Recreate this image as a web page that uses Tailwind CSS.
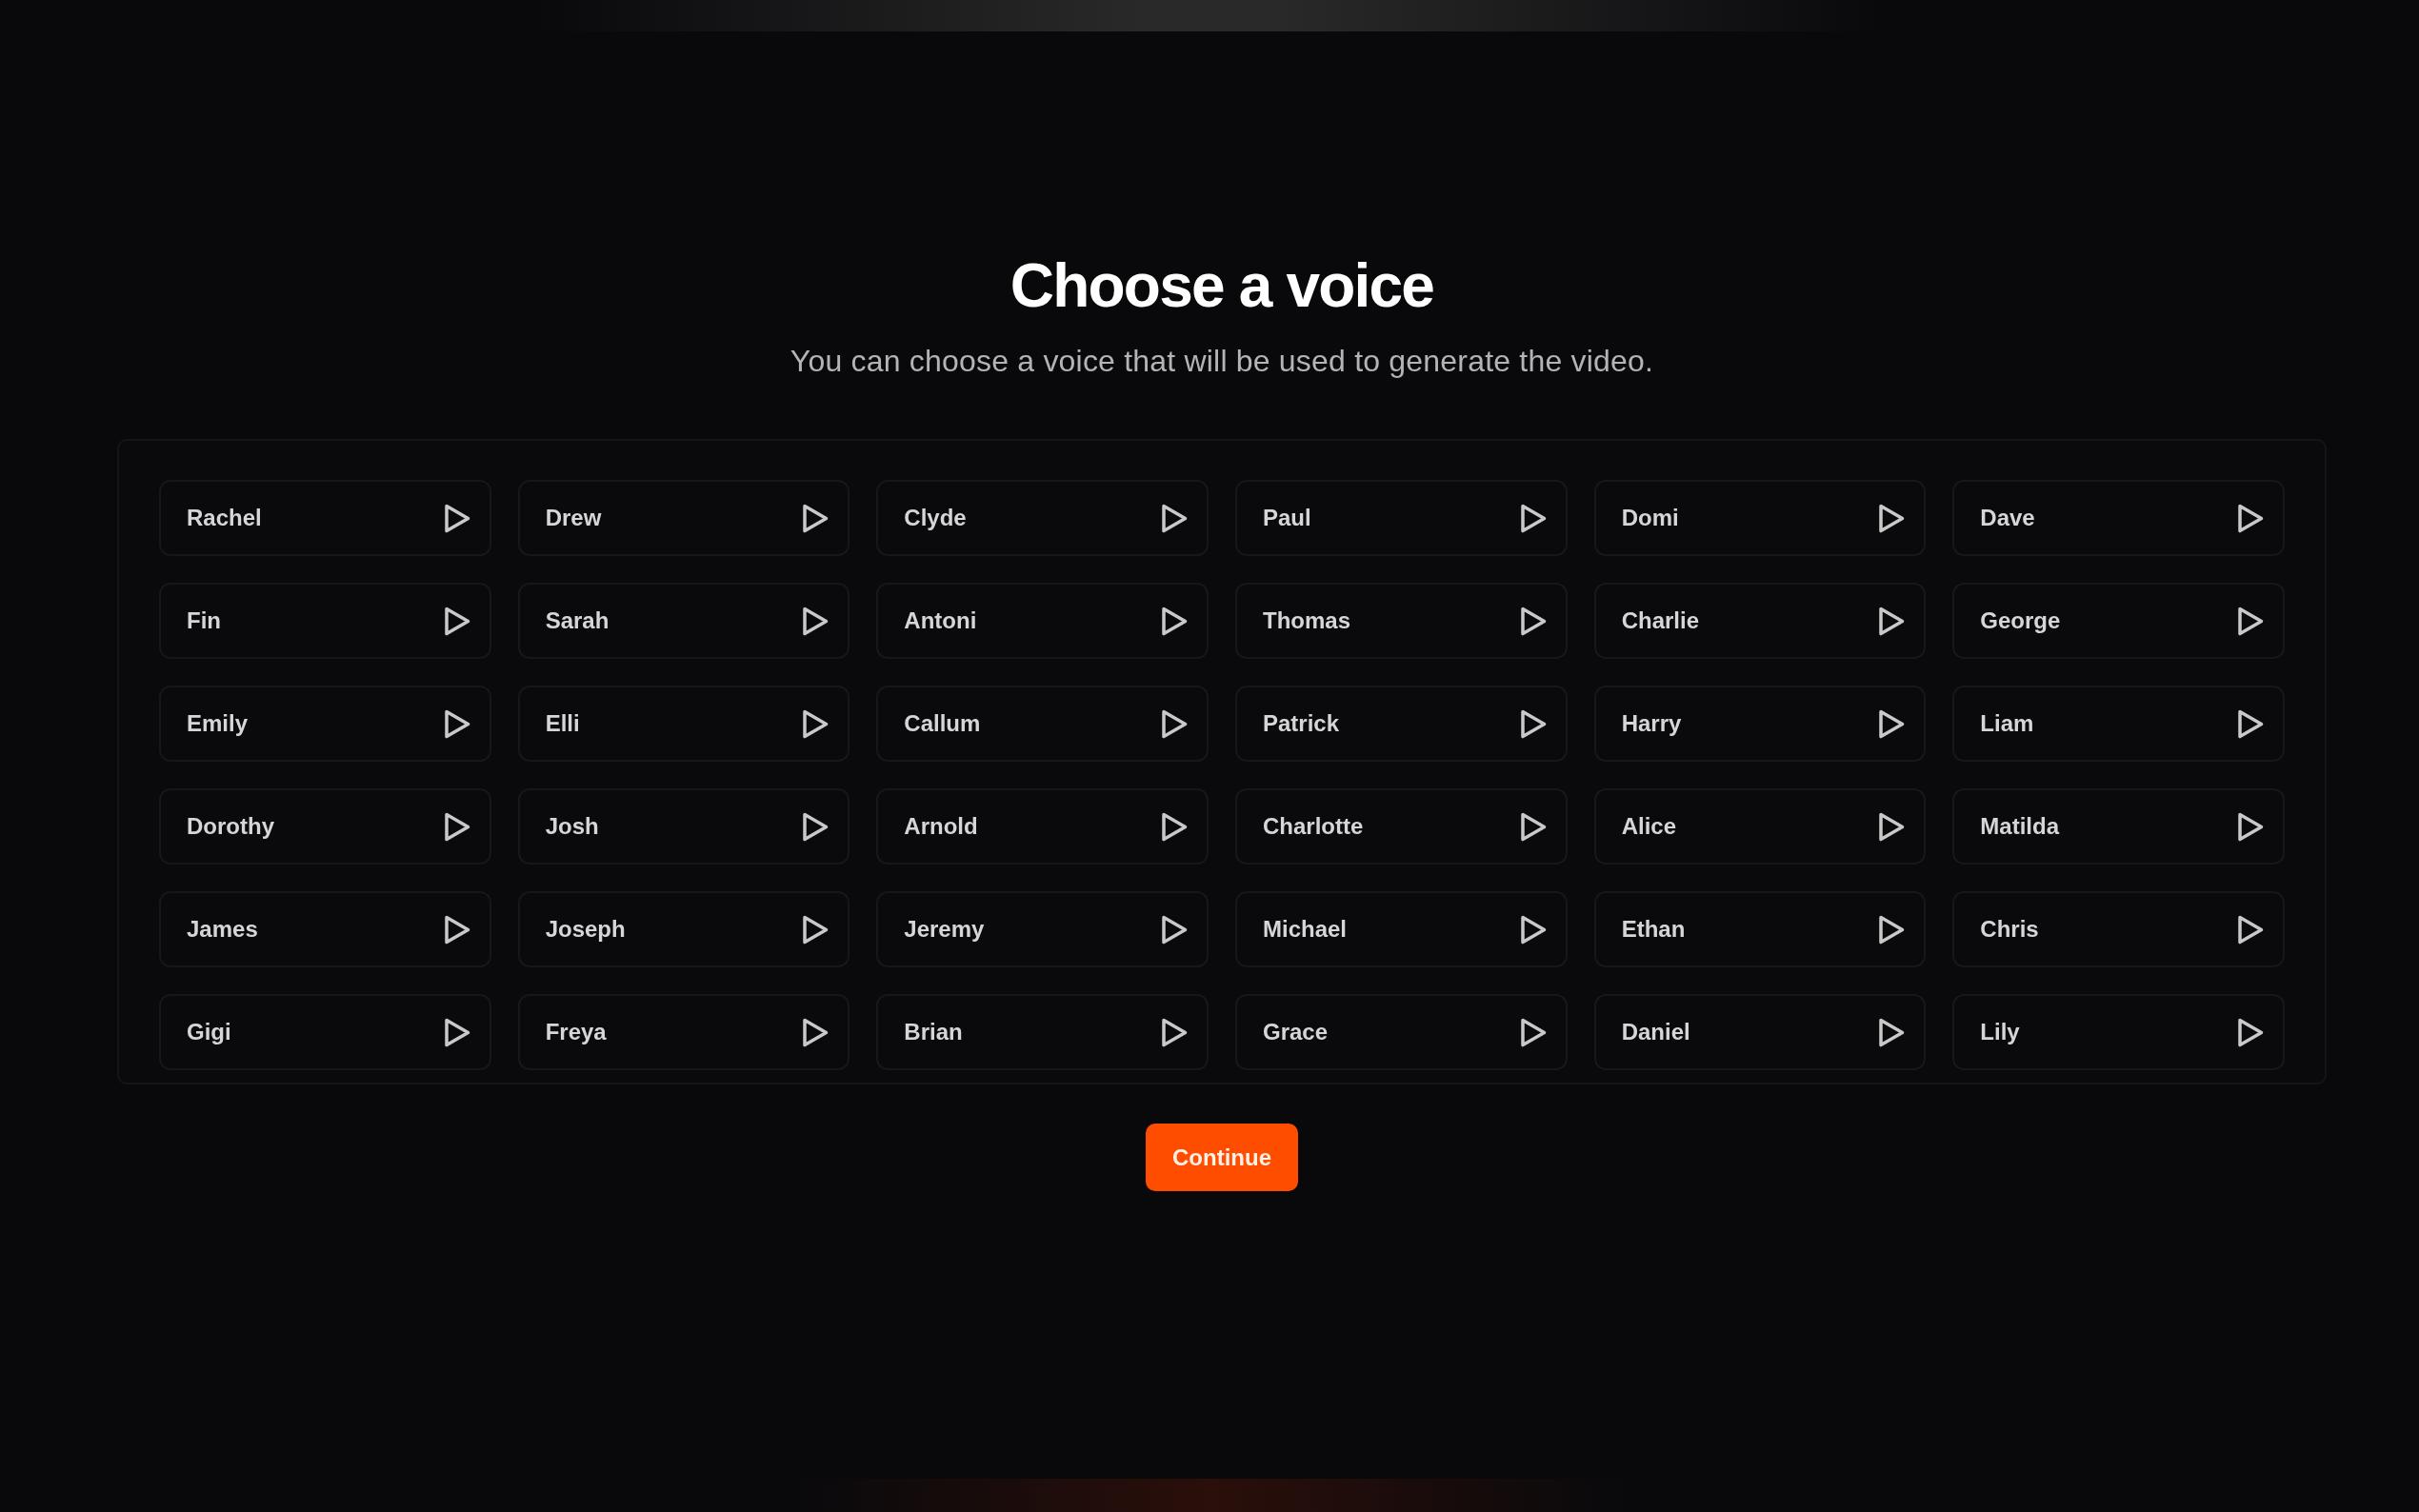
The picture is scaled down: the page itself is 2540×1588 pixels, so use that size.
<!DOCTYPE html>
<html>
<head>
<meta charset="utf-8">
<script src="https://cdn.jsdelivr.net/npm/@tailwindcss/browser@4"></script>
</head>
<body class="bg-[#09090c]">
<div class="relative w-[2540px] h-[1588px] overflow-hidden bg-[#09090c] font-['Liberation_Sans',sans-serif] flex flex-col items-center pt-[262px] pl-[26px]">
  <div class="absolute top-0 left-[560px] w-[1420px] h-[33px] bg-[linear-gradient(90deg,transparent,#292929_45%,#292929_55%,transparent)]"></div>
  <div class="absolute bottom-0 left-[830px] w-[880px] h-[35px] bg-[linear-gradient(90deg,transparent,#2a0f0a_50%,transparent)]"></div>
  <h1 class="text-[64px] leading-[76px] font-bold text-white tracking-[-1.8px] blur-[0.7px]">Choose a voice</h1>
  <p class="mt-[21px] text-[32px] leading-[40px] text-[#b4b4b8] tracking-[0.2px] blur-[0.7px]">You can choose a voice that will be used to generate the video.</p>
  <div class="mt-[62px] w-[2320px] h-[678px] border-2 border-[#141518] rounded-[10px] bg-[#0a0a0c] pt-[41px] px-[42px] overflow-hidden">
    <div class="grid grid-cols-6 gap-x-[28px] gap-y-[28px] text-[24px] font-bold text-[#d6d6d8]">
      <div class="h-[80px] flex items-center justify-between pl-[27px] pr-[18px] border-2 border-[#16171a] rounded-[12px]"><span class="blur-[0.7px]">Rachel</span><svg width="31" height="33" viewBox="0 0 31 33" fill="none" stroke="#c9c9c9" stroke-width="3.5" stroke-linejoin="round" class="blur-[0.5px]"><path d="M4 3.5 L26.5 16.5 L4 29.5 Z"/></svg></div>
      <div class="h-[80px] flex items-center justify-between pl-[27px] pr-[18px] border-2 border-[#16171a] rounded-[12px]"><span class="blur-[0.7px]">Drew</span><svg width="31" height="33" viewBox="0 0 31 33" fill="none" stroke="#c9c9c9" stroke-width="3.5" stroke-linejoin="round" class="blur-[0.5px]"><path d="M4 3.5 L26.5 16.5 L4 29.5 Z"/></svg></div>
      <div class="h-[80px] flex items-center justify-between pl-[27px] pr-[18px] border-2 border-[#16171a] rounded-[12px]"><span class="blur-[0.7px]">Clyde</span><svg width="31" height="33" viewBox="0 0 31 33" fill="none" stroke="#c9c9c9" stroke-width="3.5" stroke-linejoin="round" class="blur-[0.5px]"><path d="M4 3.5 L26.5 16.5 L4 29.5 Z"/></svg></div>
      <div class="h-[80px] flex items-center justify-between pl-[27px] pr-[18px] border-2 border-[#16171a] rounded-[12px]"><span class="blur-[0.7px]">Paul</span><svg width="31" height="33" viewBox="0 0 31 33" fill="none" stroke="#c9c9c9" stroke-width="3.5" stroke-linejoin="round" class="blur-[0.5px]"><path d="M4 3.5 L26.5 16.5 L4 29.5 Z"/></svg></div>
      <div class="h-[80px] flex items-center justify-between pl-[27px] pr-[18px] border-2 border-[#16171a] rounded-[12px]"><span class="blur-[0.7px]">Domi</span><svg width="31" height="33" viewBox="0 0 31 33" fill="none" stroke="#c9c9c9" stroke-width="3.5" stroke-linejoin="round" class="blur-[0.5px]"><path d="M4 3.5 L26.5 16.5 L4 29.5 Z"/></svg></div>
      <div class="h-[80px] flex items-center justify-between pl-[27px] pr-[18px] border-2 border-[#16171a] rounded-[12px]"><span class="blur-[0.7px]">Dave</span><svg width="31" height="33" viewBox="0 0 31 33" fill="none" stroke="#c9c9c9" stroke-width="3.5" stroke-linejoin="round" class="blur-[0.5px]"><path d="M4 3.5 L26.5 16.5 L4 29.5 Z"/></svg></div>
      <div class="h-[80px] flex items-center justify-between pl-[27px] pr-[18px] border-2 border-[#16171a] rounded-[12px]"><span class="blur-[0.7px]">Fin</span><svg width="31" height="33" viewBox="0 0 31 33" fill="none" stroke="#c9c9c9" stroke-width="3.5" stroke-linejoin="round" class="blur-[0.5px]"><path d="M4 3.5 L26.5 16.5 L4 29.5 Z"/></svg></div>
      <div class="h-[80px] flex items-center justify-between pl-[27px] pr-[18px] border-2 border-[#16171a] rounded-[12px]"><span class="blur-[0.7px]">Sarah</span><svg width="31" height="33" viewBox="0 0 31 33" fill="none" stroke="#c9c9c9" stroke-width="3.5" stroke-linejoin="round" class="blur-[0.5px]"><path d="M4 3.5 L26.5 16.5 L4 29.5 Z"/></svg></div>
      <div class="h-[80px] flex items-center justify-between pl-[27px] pr-[18px] border-2 border-[#16171a] rounded-[12px]"><span class="blur-[0.7px]">Antoni</span><svg width="31" height="33" viewBox="0 0 31 33" fill="none" stroke="#c9c9c9" stroke-width="3.5" stroke-linejoin="round" class="blur-[0.5px]"><path d="M4 3.5 L26.5 16.5 L4 29.5 Z"/></svg></div>
      <div class="h-[80px] flex items-center justify-between pl-[27px] pr-[18px] border-2 border-[#16171a] rounded-[12px]"><span class="blur-[0.7px]">Thomas</span><svg width="31" height="33" viewBox="0 0 31 33" fill="none" stroke="#c9c9c9" stroke-width="3.5" stroke-linejoin="round" class="blur-[0.5px]"><path d="M4 3.5 L26.5 16.5 L4 29.5 Z"/></svg></div>
      <div class="h-[80px] flex items-center justify-between pl-[27px] pr-[18px] border-2 border-[#16171a] rounded-[12px]"><span class="blur-[0.7px]">Charlie</span><svg width="31" height="33" viewBox="0 0 31 33" fill="none" stroke="#c9c9c9" stroke-width="3.5" stroke-linejoin="round" class="blur-[0.5px]"><path d="M4 3.5 L26.5 16.5 L4 29.5 Z"/></svg></div>
      <div class="h-[80px] flex items-center justify-between pl-[27px] pr-[18px] border-2 border-[#16171a] rounded-[12px]"><span class="blur-[0.7px]">George</span><svg width="31" height="33" viewBox="0 0 31 33" fill="none" stroke="#c9c9c9" stroke-width="3.5" stroke-linejoin="round" class="blur-[0.5px]"><path d="M4 3.5 L26.5 16.5 L4 29.5 Z"/></svg></div>
      <div class="h-[80px] flex items-center justify-between pl-[27px] pr-[18px] border-2 border-[#16171a] rounded-[12px]"><span class="blur-[0.7px]">Emily</span><svg width="31" height="33" viewBox="0 0 31 33" fill="none" stroke="#c9c9c9" stroke-width="3.5" stroke-linejoin="round" class="blur-[0.5px]"><path d="M4 3.5 L26.5 16.5 L4 29.5 Z"/></svg></div>
      <div class="h-[80px] flex items-center justify-between pl-[27px] pr-[18px] border-2 border-[#16171a] rounded-[12px]"><span class="blur-[0.7px]">Elli</span><svg width="31" height="33" viewBox="0 0 31 33" fill="none" stroke="#c9c9c9" stroke-width="3.5" stroke-linejoin="round" class="blur-[0.5px]"><path d="M4 3.5 L26.5 16.5 L4 29.5 Z"/></svg></div>
      <div class="h-[80px] flex items-center justify-between pl-[27px] pr-[18px] border-2 border-[#16171a] rounded-[12px]"><span class="blur-[0.7px]">Callum</span><svg width="31" height="33" viewBox="0 0 31 33" fill="none" stroke="#c9c9c9" stroke-width="3.5" stroke-linejoin="round" class="blur-[0.5px]"><path d="M4 3.5 L26.5 16.5 L4 29.5 Z"/></svg></div>
      <div class="h-[80px] flex items-center justify-between pl-[27px] pr-[18px] border-2 border-[#16171a] rounded-[12px]"><span class="blur-[0.7px]">Patrick</span><svg width="31" height="33" viewBox="0 0 31 33" fill="none" stroke="#c9c9c9" stroke-width="3.5" stroke-linejoin="round" class="blur-[0.5px]"><path d="M4 3.5 L26.5 16.5 L4 29.5 Z"/></svg></div>
      <div class="h-[80px] flex items-center justify-between pl-[27px] pr-[18px] border-2 border-[#16171a] rounded-[12px]"><span class="blur-[0.7px]">Harry</span><svg width="31" height="33" viewBox="0 0 31 33" fill="none" stroke="#c9c9c9" stroke-width="3.5" stroke-linejoin="round" class="blur-[0.5px]"><path d="M4 3.5 L26.5 16.5 L4 29.5 Z"/></svg></div>
      <div class="h-[80px] flex items-center justify-between pl-[27px] pr-[18px] border-2 border-[#16171a] rounded-[12px]"><span class="blur-[0.7px]">Liam</span><svg width="31" height="33" viewBox="0 0 31 33" fill="none" stroke="#c9c9c9" stroke-width="3.5" stroke-linejoin="round" class="blur-[0.5px]"><path d="M4 3.5 L26.5 16.5 L4 29.5 Z"/></svg></div>
      <div class="h-[80px] flex items-center justify-between pl-[27px] pr-[18px] border-2 border-[#16171a] rounded-[12px]"><span class="blur-[0.7px]">Dorothy</span><svg width="31" height="33" viewBox="0 0 31 33" fill="none" stroke="#c9c9c9" stroke-width="3.5" stroke-linejoin="round" class="blur-[0.5px]"><path d="M4 3.5 L26.5 16.5 L4 29.5 Z"/></svg></div>
      <div class="h-[80px] flex items-center justify-between pl-[27px] pr-[18px] border-2 border-[#16171a] rounded-[12px]"><span class="blur-[0.7px]">Josh</span><svg width="31" height="33" viewBox="0 0 31 33" fill="none" stroke="#c9c9c9" stroke-width="3.5" stroke-linejoin="round" class="blur-[0.5px]"><path d="M4 3.5 L26.5 16.5 L4 29.5 Z"/></svg></div>
      <div class="h-[80px] flex items-center justify-between pl-[27px] pr-[18px] border-2 border-[#16171a] rounded-[12px]"><span class="blur-[0.7px]">Arnold</span><svg width="31" height="33" viewBox="0 0 31 33" fill="none" stroke="#c9c9c9" stroke-width="3.5" stroke-linejoin="round" class="blur-[0.5px]"><path d="M4 3.5 L26.5 16.5 L4 29.5 Z"/></svg></div>
      <div class="h-[80px] flex items-center justify-between pl-[27px] pr-[18px] border-2 border-[#16171a] rounded-[12px]"><span class="blur-[0.7px]">Charlotte</span><svg width="31" height="33" viewBox="0 0 31 33" fill="none" stroke="#c9c9c9" stroke-width="3.5" stroke-linejoin="round" class="blur-[0.5px]"><path d="M4 3.5 L26.5 16.5 L4 29.5 Z"/></svg></div>
      <div class="h-[80px] flex items-center justify-between pl-[27px] pr-[18px] border-2 border-[#16171a] rounded-[12px]"><span class="blur-[0.7px]">Alice</span><svg width="31" height="33" viewBox="0 0 31 33" fill="none" stroke="#c9c9c9" stroke-width="3.5" stroke-linejoin="round" class="blur-[0.5px]"><path d="M4 3.5 L26.5 16.5 L4 29.5 Z"/></svg></div>
      <div class="h-[80px] flex items-center justify-between pl-[27px] pr-[18px] border-2 border-[#16171a] rounded-[12px]"><span class="blur-[0.7px]">Matilda</span><svg width="31" height="33" viewBox="0 0 31 33" fill="none" stroke="#c9c9c9" stroke-width="3.5" stroke-linejoin="round" class="blur-[0.5px]"><path d="M4 3.5 L26.5 16.5 L4 29.5 Z"/></svg></div>
      <div class="h-[80px] flex items-center justify-between pl-[27px] pr-[18px] border-2 border-[#16171a] rounded-[12px]"><span class="blur-[0.7px]">James</span><svg width="31" height="33" viewBox="0 0 31 33" fill="none" stroke="#c9c9c9" stroke-width="3.5" stroke-linejoin="round" class="blur-[0.5px]"><path d="M4 3.5 L26.5 16.5 L4 29.5 Z"/></svg></div>
      <div class="h-[80px] flex items-center justify-between pl-[27px] pr-[18px] border-2 border-[#16171a] rounded-[12px]"><span class="blur-[0.7px]">Joseph</span><svg width="31" height="33" viewBox="0 0 31 33" fill="none" stroke="#c9c9c9" stroke-width="3.5" stroke-linejoin="round" class="blur-[0.5px]"><path d="M4 3.5 L26.5 16.5 L4 29.5 Z"/></svg></div>
      <div class="h-[80px] flex items-center justify-between pl-[27px] pr-[18px] border-2 border-[#16171a] rounded-[12px]"><span class="blur-[0.7px]">Jeremy</span><svg width="31" height="33" viewBox="0 0 31 33" fill="none" stroke="#c9c9c9" stroke-width="3.5" stroke-linejoin="round" class="blur-[0.5px]"><path d="M4 3.5 L26.5 16.5 L4 29.5 Z"/></svg></div>
      <div class="h-[80px] flex items-center justify-between pl-[27px] pr-[18px] border-2 border-[#16171a] rounded-[12px]"><span class="blur-[0.7px]">Michael</span><svg width="31" height="33" viewBox="0 0 31 33" fill="none" stroke="#c9c9c9" stroke-width="3.5" stroke-linejoin="round" class="blur-[0.5px]"><path d="M4 3.5 L26.5 16.5 L4 29.5 Z"/></svg></div>
      <div class="h-[80px] flex items-center justify-between pl-[27px] pr-[18px] border-2 border-[#16171a] rounded-[12px]"><span class="blur-[0.7px]">Ethan</span><svg width="31" height="33" viewBox="0 0 31 33" fill="none" stroke="#c9c9c9" stroke-width="3.5" stroke-linejoin="round" class="blur-[0.5px]"><path d="M4 3.5 L26.5 16.5 L4 29.5 Z"/></svg></div>
      <div class="h-[80px] flex items-center justify-between pl-[27px] pr-[18px] border-2 border-[#16171a] rounded-[12px]"><span class="blur-[0.7px]">Chris</span><svg width="31" height="33" viewBox="0 0 31 33" fill="none" stroke="#c9c9c9" stroke-width="3.5" stroke-linejoin="round" class="blur-[0.5px]"><path d="M4 3.5 L26.5 16.5 L4 29.5 Z"/></svg></div>
      <div class="h-[80px] flex items-center justify-between pl-[27px] pr-[18px] border-2 border-[#16171a] rounded-[12px]"><span class="blur-[0.7px]">Gigi</span><svg width="31" height="33" viewBox="0 0 31 33" fill="none" stroke="#c9c9c9" stroke-width="3.5" stroke-linejoin="round" class="blur-[0.5px]"><path d="M4 3.5 L26.5 16.5 L4 29.5 Z"/></svg></div>
      <div class="h-[80px] flex items-center justify-between pl-[27px] pr-[18px] border-2 border-[#16171a] rounded-[12px]"><span class="blur-[0.7px]">Freya</span><svg width="31" height="33" viewBox="0 0 31 33" fill="none" stroke="#c9c9c9" stroke-width="3.5" stroke-linejoin="round" class="blur-[0.5px]"><path d="M4 3.5 L26.5 16.5 L4 29.5 Z"/></svg></div>
      <div class="h-[80px] flex items-center justify-between pl-[27px] pr-[18px] border-2 border-[#16171a] rounded-[12px]"><span class="blur-[0.7px]">Brian</span><svg width="31" height="33" viewBox="0 0 31 33" fill="none" stroke="#c9c9c9" stroke-width="3.5" stroke-linejoin="round" class="blur-[0.5px]"><path d="M4 3.5 L26.5 16.5 L4 29.5 Z"/></svg></div>
      <div class="h-[80px] flex items-center justify-between pl-[27px] pr-[18px] border-2 border-[#16171a] rounded-[12px]"><span class="blur-[0.7px]">Grace</span><svg width="31" height="33" viewBox="0 0 31 33" fill="none" stroke="#c9c9c9" stroke-width="3.5" stroke-linejoin="round" class="blur-[0.5px]"><path d="M4 3.5 L26.5 16.5 L4 29.5 Z"/></svg></div>
      <div class="h-[80px] flex items-center justify-between pl-[27px] pr-[18px] border-2 border-[#16171a] rounded-[12px]"><span class="blur-[0.7px]">Daniel</span><svg width="31" height="33" viewBox="0 0 31 33" fill="none" stroke="#c9c9c9" stroke-width="3.5" stroke-linejoin="round" class="blur-[0.5px]"><path d="M4 3.5 L26.5 16.5 L4 29.5 Z"/></svg></div>
      <div class="h-[80px] flex items-center justify-between pl-[27px] pr-[18px] border-2 border-[#16171a] rounded-[12px]"><span class="blur-[0.7px]">Lily</span><svg width="31" height="33" viewBox="0 0 31 33" fill="none" stroke="#c9c9c9" stroke-width="3.5" stroke-linejoin="round" class="blur-[0.5px]"><path d="M4 3.5 L26.5 16.5 L4 29.5 Z"/></svg></div>
    </div>
  </div>
  <button class="mt-[41px] w-[160px] h-[71px] rounded-[10px] bg-[#ff4d00] text-[24px] font-bold text-[#fff0e8]"><span class="blur-[0.7px] inline-block">Continue</span></button>
</div>
</body>
</html>
